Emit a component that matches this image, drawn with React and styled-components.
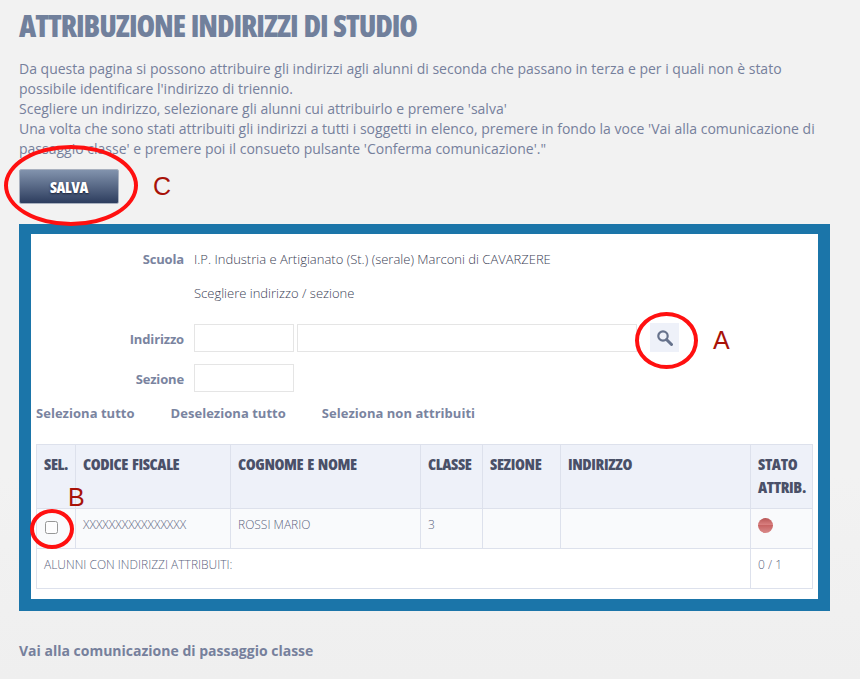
import React from "react";
import styled, { createGlobalStyle } from "styled-components";

const Global = createGlobalStyle`
  html, body { margin: 0; padding: 0; background: #f1f1f1; }
  body { font-family: "Open Sans", "Liberation Sans", sans-serif; overflow: hidden; }
`;

const Page = styled.div`
  position: relative;
  width: 860px;
  height: 679px;
  box-sizing: border-box;
  padding: 0 30px 0 19px;
  background: linear-gradient(#f2f2f2 0%, #f2f2f2 70%, #efefef 100%);
  overflow: hidden;
`;

const Title = styled.h1`
  margin: 0;
  padding-top: 8px;
  height: 45px;
  box-sizing: border-box;
  font-size: 30px;
  line-height: 36px;
  font-weight: 800;
  font-stretch: 75%;
  letter-spacing: -1.05px;
  word-spacing: 1.5px;
  color: #71809c;
  white-space: nowrap;
`;

const Intro = styled.p`
  margin: 14px 0 0;
  font-size: 14px;
  line-height: 20px;
  color: #76809c;
  width: 811px;
`;

const SaveButton = styled.button`
  display: block;
  margin-top: 10px;
  width: 100px;
  height: 35px;
  padding: 0;
  border: 1px solid #a9b1bf;
  border-radius: 2px;
  background: linear-gradient(#8293ad, #2d3d5e);
  color: #fff;
  font-family: inherit;
  font-size: 15.5px;
  font-weight: 800;
  font-stretch: 75%;
  letter-spacing: -0.4px;
  text-shadow: 0 1px 2px #1a2238;
`;

const Frame = styled.section`
  margin-top: 20px;
  width: 811px;
  height: 387px;
  box-sizing: border-box;
  border: 12px solid #1b75a9;
  border-top-width: 10px;
  background: #fff;
  padding: 0 5px;
`;

const Row = styled.div`
  display: flex;
  align-items: center;
  height: ${(p) => p.$h}px;
  margin-top: ${(p) => p.$top || 0}px;
`;

const Label = styled.label`
  width: 158px;
  padding: ${(p) => (p.$low ? "2px" : "0")} 10px 0 0;
  box-sizing: border-box;
  text-align: right;
  font-size: 13px;
  font-weight: 700;
  letter-spacing: -0.15px;
  color: #7a84a0;
`;

const Value = styled.span`
  font-size: 13px;
  font-weight: 300;
  color: #3c4256;
`;

const Input = styled.input`
  width: ${(p) => p.$w}px;
  height: 28px;
  box-sizing: border-box;
  margin: 0 3px 0 0;
  padding: 0;
  border: 1px solid #e5e5e5;
  background: #fff;
`;

const SearchButton = styled.button`
  width: 29px;
  height: 29px;
  margin-left: 10px;
  padding: 0;
  border: 0;
  background: #eef1f9;
  display: flex;
  align-items: center;
  justify-content: center;
`;

const Links = styled.nav`
  display: flex;
  margin-top: 11px;
  height: 20px;
  align-items: center;
`;

const ActionLink = styled.a`
  font-size: 13px;
  font-weight: 700;
  letter-spacing: 0.03px;
  color: #7a84a0;
  margin-right: 36px;
  white-space: nowrap;
`;

const Table = styled.table`
  margin-top: 21px;
  border-collapse: collapse;
  table-layout: fixed;
  width: 776px;
`;

const Head = styled.th`
  height: 64px;
  box-sizing: border-box;
  border: 1px solid #dde1ec;
  background: #eef1f9;
  padding: 8px 7px 0;
  vertical-align: top;
  text-align: left;
  font-size: 16px;
  line-height: 23px;
  font-weight: 800;
  font-stretch: 75%;
  letter-spacing: -0.38px;
  word-spacing: 1.5px;
  color: #4a5068;
`;

const Cell = styled.td`
  height: 40px;
  box-sizing: border-box;
  border: 1px solid #dde1ec;
  background: ${(p) => (p.$plain ? "#fff" : "#f9fafc")};
  padding: 7px 7px 0;
  vertical-align: top;
  font-size: 12px;
  line-height: 17px;
  font-weight: 300;
  color: #5c6580;
`;

const Check = styled.input`
  display: block;
  margin: 5px 0 0 1px;
  width: 13px;
  height: 13px;
  opacity: 0.75;
`;

const Dot = styled.span`
  display: block;
  width: 15px;
  height: 15px;
  margin-top: 2px;
  border-radius: 50%;
  background: linear-gradient(#b85656 0%, #d97f7f 45%, #c86464 50%, #d98a8a 100%);
`;

const Next = styled.a`
  position: absolute;
  left: 19px;
  top: 641px;
  font-size: 14px;
  line-height: 19px;
  font-weight: 700;
  color: #76809c;
`;

const Ring = styled.span`
  position: absolute;
  left: ${(p) => p.$x}px;
  top: ${(p) => p.$y}px;
  width: ${(p) => p.$w}px;
  height: ${(p) => p.$h}px;
  box-sizing: border-box;
  border: 4px solid #ff1010;
  border-radius: 50%;
  pointer-events: none;
`;

const Mark = styled.span`
  position: absolute;
  left: ${(p) => p.$x}px;
  top: ${(p) => p.$y}px;
  font-family: "Liberation Sans", sans-serif;
  font-size: 25px;
  line-height: 28px;
  color: #a81208;
`;

const heads = [
  ["SEL.", 39],
  ["CODICE FISCALE", 155],
  ["COGNOME E NOME", 190],
  ["CLASSE", 62],
  ["SEZIONE", 78],
  ["INDIRIZZO", 190],
  ["STATO ATTRIB.", 62],
];

export default function App() {
  return (
    <Page>
      <Global />
      <Title>ATTRIBUZIONE INDIRIZZI DI STUDIO</Title>
      <Intro>
        Da questa pagina si possono attribuire gli indirizzi agli alunni di seconda che passano in terza e per i quali non è stato possibile identificare l'indirizzo di triennio.
        <br />
        Scegliere un indirizzo, selezionare gli alunni cui attribuirlo e premere 'salva'
        <br />
        Una volta che sono stati attribuiti gli indirizzi a tutti i soggetti in elenco, premere in fondo la voce 'Vai alla comunicazione di passaggio classe' e premere poi il consueto pulsante 'Conferma comunicazione'."
      </Intro>
      <SaveButton>SALVA</SaveButton>
      <Frame>
        <Row $h={20} $top={15}>
          <Label>Scuola</Label>
          <Value>I.P. Industria e Artigianato (St.) (serale) Marconi di CAVARZERE</Value>
        </Row>
        <Row $h={20} $top={14}>
          <Label />
          <Value>Scegliere indirizzo / sezione</Value>
        </Row>
        <Row $h={29} $top={20}>
          <Label $low>Indirizzo</Label>
          <Input $w={100} />
          <Input $w={340} />
          <SearchButton aria-label="Cerca">
            <svg width="17" height="17" viewBox="0 0 17 17" fill="none" stroke="#66728c">
              <circle cx="7" cy="7" r="4.7" strokeWidth="2.2" />
              <path d="M10.5 10.5 15.5 15.5" strokeWidth="3" strokeLinecap="round" />
            </svg>
          </SearchButton>
        </Row>
        <Row $h={28} $top={12}>
          <Label $low>Sezione</Label>
          <Input $w={100} />
        </Row>
        <Links>
          <ActionLink>Seleziona tutto</ActionLink>
          <ActionLink>Deseleziona tutto</ActionLink>
          <ActionLink>Seleziona non attribuiti</ActionLink>
        </Links>
        <Table>
          <colgroup>
            {heads.map(([h, w]) => (
              <col key={h} width={w} />
            ))}
          </colgroup>
          <thead>
            <tr>
              {heads.map(([h]) => (
                <Head key={h}>{h}</Head>
              ))}
            </tr>
          </thead>
          <tbody>
            <tr>
              <Cell><Check type="checkbox" /></Cell>
              <Cell>XXXXXXXXXXXXXXXX</Cell>
              <Cell>ROSSI MARIO</Cell>
              <Cell>3</Cell>
              <Cell />
              <Cell />
              <Cell><Dot /></Cell>
            </tr>
            <tr>
              <Cell $plain colSpan={6}>ALUNNI CON INDIRIZZI ATTRIBUITI:</Cell>
              <Cell $plain>0 / 1</Cell>
            </tr>
          </tbody>
        </Table>
      </Frame>
      <Next>Vai alla comunicazione di passaggio classe</Next>
      <Ring $x={4} $y={145} $w={134} $h={81} />
      <Mark $x={153} $y={172}>C</Mark>
      <Ring $x={635} $y={312} $w={63} $h={57} />
      <Mark $x={713} $y={326}>A</Mark>
      <Ring $x={30} $y={509} $w={44} $h={40} />
      <Mark $x={68} $y={483}>B</Mark>
    </Page>
  );
}
